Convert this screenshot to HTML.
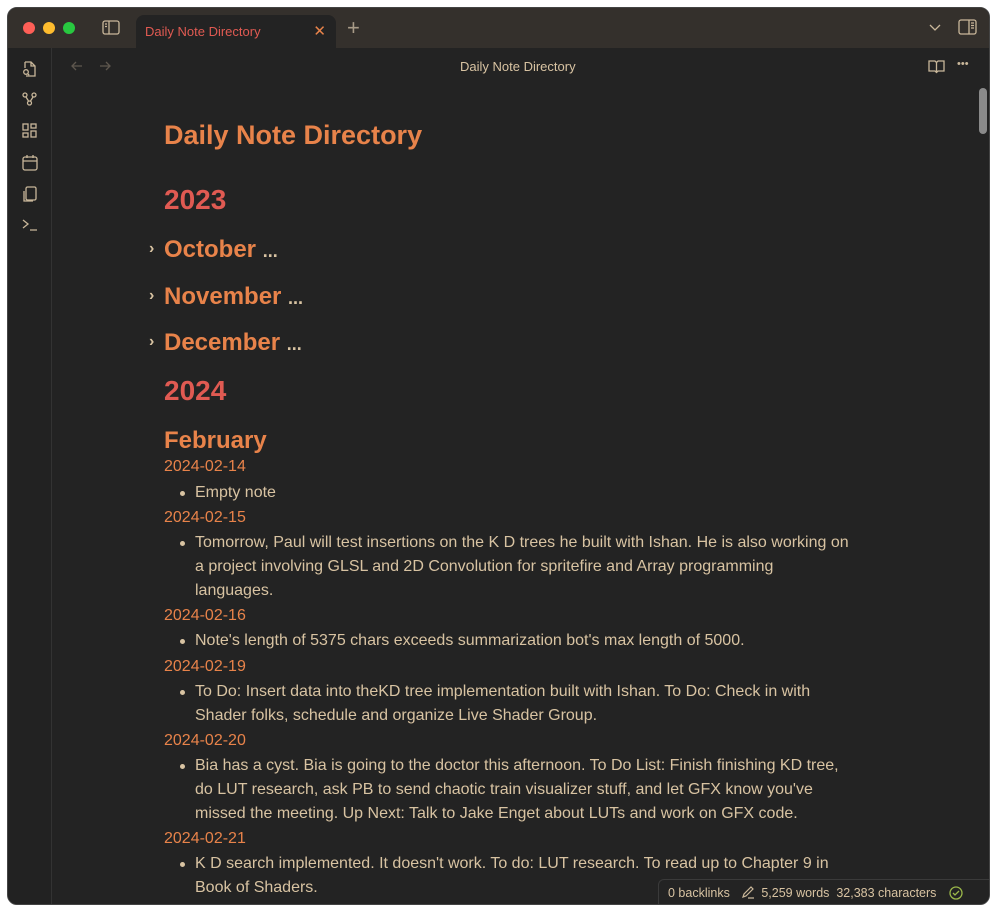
<!DOCTYPE html>
<html><head><style>
*{margin:0;padding:0;box-sizing:border-box}
body{width:996px;height:911px;background:#fff;font-family:"Liberation Sans",sans-serif;position:relative;overflow:hidden}
.win{position:absolute;left:7px;top:7px;width:983px;height:898px;background:#232323;border-radius:10px;overflow:hidden;border:1px solid #444}
.tb{position:absolute;left:0;top:0;width:100%;height:40px;background:#34302c}
.dot{position:absolute;top:14px;width:12px;height:12px;border-radius:50%}
.tab{position:absolute;left:128px;top:7px;width:200px;height:33px;background:#232323;border-radius:8px 8px 0 0;color:#e05a52;font-size:13px;padding:9px 0 0 9px}
.side{position:absolute;left:0;top:40px;width:44px;bottom:0;border-right:1px solid #333;background:#222}
.a{position:absolute;color:#c9b79a}
.c{position:absolute;left:156px;top:0;width:710px;color:#d8c3a2}
h1{position:absolute;font-size:27px;color:#e8834a;font-weight:bold;white-space:nowrap}
.yr{position:absolute;font-size:28px;color:#e05a52;font-weight:bold}
.mo{position:absolute;font-size:24px;color:#e8834a;font-weight:bold}
.mo b{color:#d8c3a2;font-size:18px}
.d{position:absolute;font-size:16px;color:#e8834a}
.b{position:absolute;left:31px;width:665px;font-size:16px;line-height:24px;color:#d8c3a2}
.b:before{content:"";position:absolute;left:-15px;top:10px;width:5px;height:5px;border-radius:50%;background:#d8c3a2}
.car{position:absolute;left:-15px;font-size:16px;color:#d8c3a2}
</style></head><body>
<div class="win">
<div class="tb">
<div class="dot" style="left:15px;background:#fe5f57"></div>
<div class="dot" style="left:35px;background:#febc2e"></div>
<div class="dot" style="left:55px;background:#28c840"></div>
<svg style="position:absolute;left:94px;top:12px" width="18" height="15" viewBox="0 0 18 15" fill="none" stroke="#c9b79a" stroke-width="1.3"><rect x="1" y="1" width="16" height="13" rx="2"/><line x1="7" y1="1" x2="7" y2="14"/><line x1="3" y1="4" x2="5" y2="4"/><line x1="3" y1="6.5" x2="5" y2="6.5"/></svg>
<div class="tab">Daily Note Directory<span style="position:absolute;right:10px;top:7px;color:#e8834a;font-size:15px">✕</span></div>
<div class="a" style="left:339px;top:7px;font-size:22px;color:#a89b88">+</div>
<svg style="position:absolute;left:921px;top:16px" width="12" height="8" fill="none" stroke="#c9b79a" stroke-width="1.3"><path d="M1 1l5 5 5-5"/></svg>
<svg style="position:absolute;left:950px;top:11px" width="19" height="16" fill="none" stroke="#c9b79a" stroke-width="1.3"><rect x="1" y="1" width="17" height="14" rx="2"/><line x1="11" y1="1" x2="11" y2="15"/><line x1="13" y1="4" x2="16" y2="4"/><line x1="13" y1="6.5" x2="16" y2="6.5"/><line x1="13" y1="9" x2="16" y2="9"/></svg>
</div>
<div class="side">
<svg style="position:absolute;left:13px;top:12px" width="18" height="200" fill="none" stroke="#c9b79a" stroke-width="1.3">
<path d="M4 2h6l4 4v10H5M4 2v6M10 2v4h4"/><circle cx="5" cy="12" r="2.3"/><path d="M6.7 13.7l1.5 1.5"/>
<circle cx="4" cy="35" r="2"/><circle cx="13" cy="35" r="2"/><circle cx="8.5" cy="43" r="2"/><path d="M5 37l2.5 4M12 37l-2.5 4"/>
<rect x="2" y="64" width="5" height="6"/><rect x="10" y="64" width="5" height="4"/><rect x="2" y="73" width="5" height="4"/><rect x="10" y="71" width="5" height="6"/>
<rect x="2" y="97" width="14" height="13" rx="2"/><path d="M2 101h14M6 95v3M12 95v3"/>
<rect x="5" y="127" width="10" height="13" rx="1.5"/><path d="M3 131v10h9"/>
<path d="M2 160l5 4-5 4M9 170h7"/>
</svg>
</div>
<svg style="position:absolute;left:62px;top:52px" width="50" height="12" fill="none" stroke="#5e574e" stroke-width="1.3"><path d="M12 6H2M6 2L2 6l4 4M30 6h10M36 2l4 4-4 4"/></svg>
<div class="a" style="left:452px;top:51px;font-size:13px;color:#d8c3a2">Daily Note Directory</div>
<svg style="position:absolute;left:920px;top:51px" width="17" height="15" fill="none" stroke="#c9b79a" stroke-width="1.3"><path d="M1 2h6l1.5 1.5L10 2h6v10h-6l-1.5 1.5L7 12H1zM8.5 3.5v10"/></svg>
<div class="a" style="left:949px;top:50px;font-size:11px;color:#c9b79a;letter-spacing:0px">•••</div>
<div style="position:absolute;left:971px;top:80px;width:8px;height:46px;border-radius:4px;background:#8a8a8a"></div>
<div class="c">
<h1 style="top:112px">Daily Note Directory</h1>
<div class="yr" style="top:176px">2023</div>
<div class="mo" style="top:228px"><span class="car" style="top:4px">›</span>October <b>...</b></div>
<div class="mo" style="top:275px"><span class="car" style="top:4px">›</span>November <b>...</b></div>
<div class="mo" style="top:321px"><span class="car" style="top:4px">›</span>December <b>...</b></div>
<div class="yr" style="top:367px">2024</div>
<div class="mo" style="top:419px">February</div>
<div class="d" style="top:450px">2024-02-14</div>
<div class="b" style="top:473px">Empty note</div>
<div class="d" style="top:501px">2024-02-15</div>
<div class="b" style="top:523px">Tomorrow, Paul will test insertions on the K D trees he built with Ishan. He is also working on<br>a project involving GLSL and 2D Convolution for spritefire and Array programming<br>languages.</div>
<div class="d" style="top:599px">2024-02-16</div>
<div class="b" style="top:621px">Note's length of 5375 chars exceeds summarization bot's max length of 5000.</div>
<div class="d" style="top:650px">2024-02-19</div>
<div class="b" style="top:672px">To Do: Insert data into theKD tree implementation built with Ishan. To Do: Check in with<br>Shader folks, schedule and organize Live Shader Group.</div>
<div class="d" style="top:724px">2024-02-20</div>
<div class="b" style="top:746px">Bia has a cyst. Bia is going to the doctor this afternoon. To Do List: Finish finishing KD tree,<br>do LUT research, ask PB to send chaotic train visualizer stuff, and let GFX know you've<br>missed the meeting. Up Next: Talk to Jake Enget about LUTs and work on GFX code.</div>
<div class="d" style="top:822px">2024-02-21</div>
<div class="b" style="top:844px">K D search implemented. It doesn't work. To do: LUT research. To read up to Chapter 9 in<br>Book of Shaders.</div>
</div>
<div style="position:absolute;left:650px;top:871px;width:333px;height:28px;background:#232323;border:1px solid #3a3a3a;border-radius:6px 0 0 0;font-size:12.5px;color:#d8c3a2;padding:6px 0 0 9px;white-space:nowrap">0 backlinks <svg width="14" height="13" style="margin:0 6px -2px 8px" fill="none" stroke="#c9b79a" stroke-width="1.2"><path d="M2 11l1-3 7-7 2 2-7 7zM7 12h6"/></svg>5,259 words&nbsp; 32,383 characters <svg width="14" height="14" style="margin:0 0 -3px 9px" fill="none" stroke="#9bb84a" stroke-width="1.3"><circle cx="7" cy="7" r="6"/><path d="M4 7l2 2 4-4"/></svg></div>
</div>
</body></html>
